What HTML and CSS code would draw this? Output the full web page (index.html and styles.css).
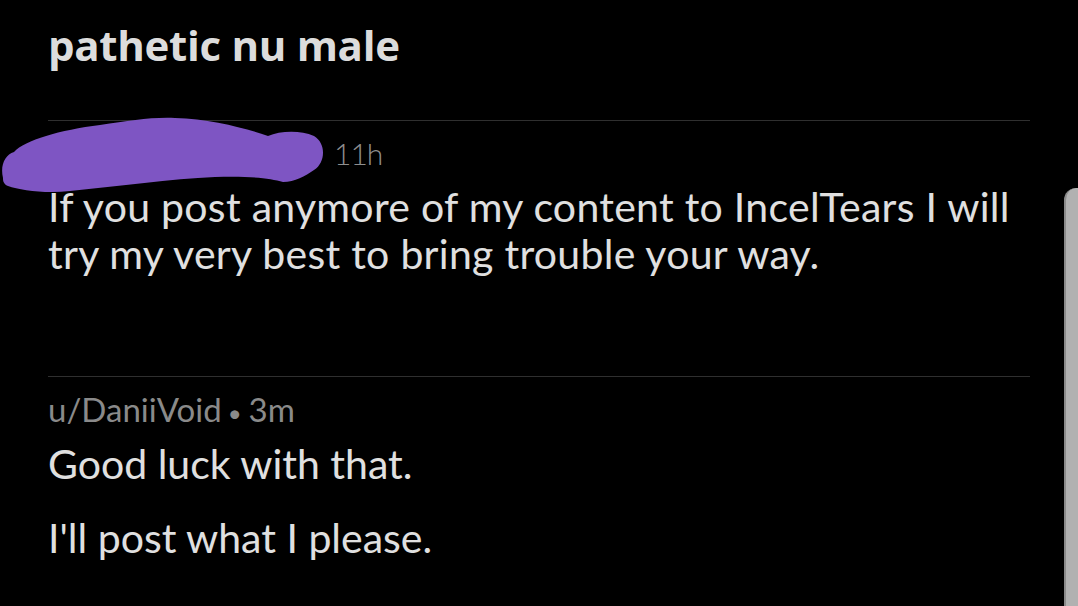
FILE: index.html
```html
<!DOCTYPE html>
<html>
<head>
<meta charset="utf-8">
<link rel="stylesheet" href="styles.css">
</head>
<body>
<div class="page">
  <h1 class="title">pathetic nu male</h1>
  <div class="comment first">
    <div class="meta"><span class="user hidden-user">redacted user</span><span class="time">11h</span></div>
    <p class="text spaced">If you post anymore of my content to IncelTears I will try my very best to bring trouble your way.</p>
  </div>
  <div class="comment second">
    <div class="meta"><span class="user">u/DaniiVoid</span><span class="dot">•</span><span class="time">3m</span></div>
    <p class="text">Good luck with that.</p>
    <p class="text">I'll post what I please.</p>
  </div>
</div>
<svg class="blot" width="330" height="90" viewBox="0 0 330 90">
  <path d="M3 68 C0 55 5 45 14 42 C25 30 60 20 100 15 C130 11 150 7 175 8 C210 9 245 18 268 26 C280 21 300 20 314 26 C326 33 326 52 314 60 C305 66 295 72 283 72 C270 68 250 66 215 67 C170 69 120 76 70 81 C45 84 20 80 8 76 C3 74 3 70 3 68 Z" fill="#7e55c3"/>
</svg>
<div class="scroll-handle"></div>
</body>
</html>
```

FILE: styles.css
```css
html, body {
  margin: 0;
  padding: 0;
  background: #000;
  width: 1078px;
  height: 606px;
  overflow: hidden;
}
body {
  position: relative;
  font-family: Lato, "Liberation Sans", sans-serif;
  color: #e2e2e2;
}
.page {
  padding: 18px 48px 0 48px;
  width: 982px;
}
.title {
  margin: 0;
  font-family: "Open Sans", sans-serif;
  font-weight: 700;
  font-size: 42px;
  line-height: 54px;
  color: #dcdcdc;
  letter-spacing: -0.3px;
}
.comment {
  position: relative;
  border-top: 1px solid #2f2f2f;
}
.first {
  margin-top: 48px;
  height: 255px;
}
.meta {
  display: flex;
  align-items: baseline;
  color: #8a8a8a;
  font-size: 33px;
  line-height: 38px;
}
.first .meta {
  padding-top: 12px;
}
.hidden-user {
  width: 286px;
  color: transparent;
}
.first .time {
  font-size: 30px;
  font-weight: 300;
  letter-spacing: -1px;
  color: #8e8e8e;
}
.second .meta {
  padding-top: 13px;
}
.dot {
  margin: 0 7px 0 6px;
  font-size: 24px;
}
.text {
  margin: 0;
  font-size: 41px;
  line-height: 47px;
  color: #e0e0e0;
}
.first .text {
  margin-top: 11px;
  width: 982px;
}
.spaced {
  letter-spacing: 0.28px;
}
.second .text:nth-of-type(1) {
  margin-top: 8px;
}
.second .text + .text {
  margin-top: 27px;
}
.blot {
  position: absolute;
  left: 0;
  top: 110px;
}
.scroll-handle {
  position: absolute;
  right: 0;
  top: 188px;
  width: 12px;
  height: 430px;
  background: #b1b1b1;
  border-left: 2px solid #8a8a8a;
  border-top-left-radius: 12px;
}
```
